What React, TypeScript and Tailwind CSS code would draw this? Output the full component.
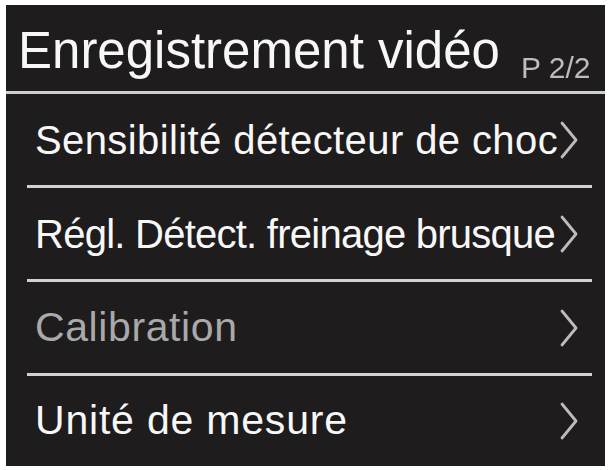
const ITEMS = [
  { label: 'Sensibilité détecteur de choc', dim: false, size: 'text-[40px]', track: 'tracking-[0.4px]' },
  { label: 'Régl. Détect. freinage brusque', dim: false, size: 'text-[40px]', track: 'tracking-[-0.75px]' },
  { label: 'Calibration', dim: true, size: 'text-[41px]', track: 'tracking-[0.6px]' },
  { label: 'Unité de mesure', dim: false, size: 'text-[41px]', track: 'tracking-[0.8px]' },
]

function Chevron() {
  return (
    <svg width="20" height="38" viewBox="0 0 20 38" fill="none" stroke="#bcbcbc" strokeWidth="2.8" strokeLinecap="round" strokeLinejoin="round">
      <polyline points="3,2 17,19 3,36" />
    </svg>
  )
}

export default function App() {
  return (
    <div className="w-[612px] h-[470px] bg-white pl-[6px] pr-[7px] pt-[5px] pb-[4px] font-['Liberation_Sans',Arial,sans-serif]">
      <div className="flex h-full flex-col bg-[#1f1c1d]">
        {/* header */}
        <div className="flex h-[86px] items-start pl-[12px]">
          <span className="mt-[20px] text-[51px] leading-none text-[#f7f7f7]">Enregistrement vidéo</span>
          <span className="ml-[21px] mt-[48px] text-[30px] leading-none text-[#bdbdbd] blur-[0.4px]">P 2/2</span>
        </div>
        <div className="h-[3px] bg-[#cfcfcf]" />

        {ITEMS.map((item, i) => (
          <div key={item.label} className="flex flex-col">
            <div className={`flex items-center pl-[29px] pr-[26px] ${i === ITEMS.length - 1 ? 'h-[89px]' : 'h-[91px]'}`}>
              <span
                className={`whitespace-nowrap leading-none ${item.size} ${item.track} ${
                  item.dim ? 'text-[#a9a9a9]' : 'text-[#f7f7f7]'
                }`}
              >
                {item.label}
              </span>
              <span className="ml-auto flex shrink-0">
                <Chevron />
              </span>
            </div>
            {i < ITEMS.length - 1 && <div className="ml-[21px] mr-[13px] h-[3px] bg-[#d2d2d2]" />}
          </div>
        ))}
      </div>
    </div>
  )
}
